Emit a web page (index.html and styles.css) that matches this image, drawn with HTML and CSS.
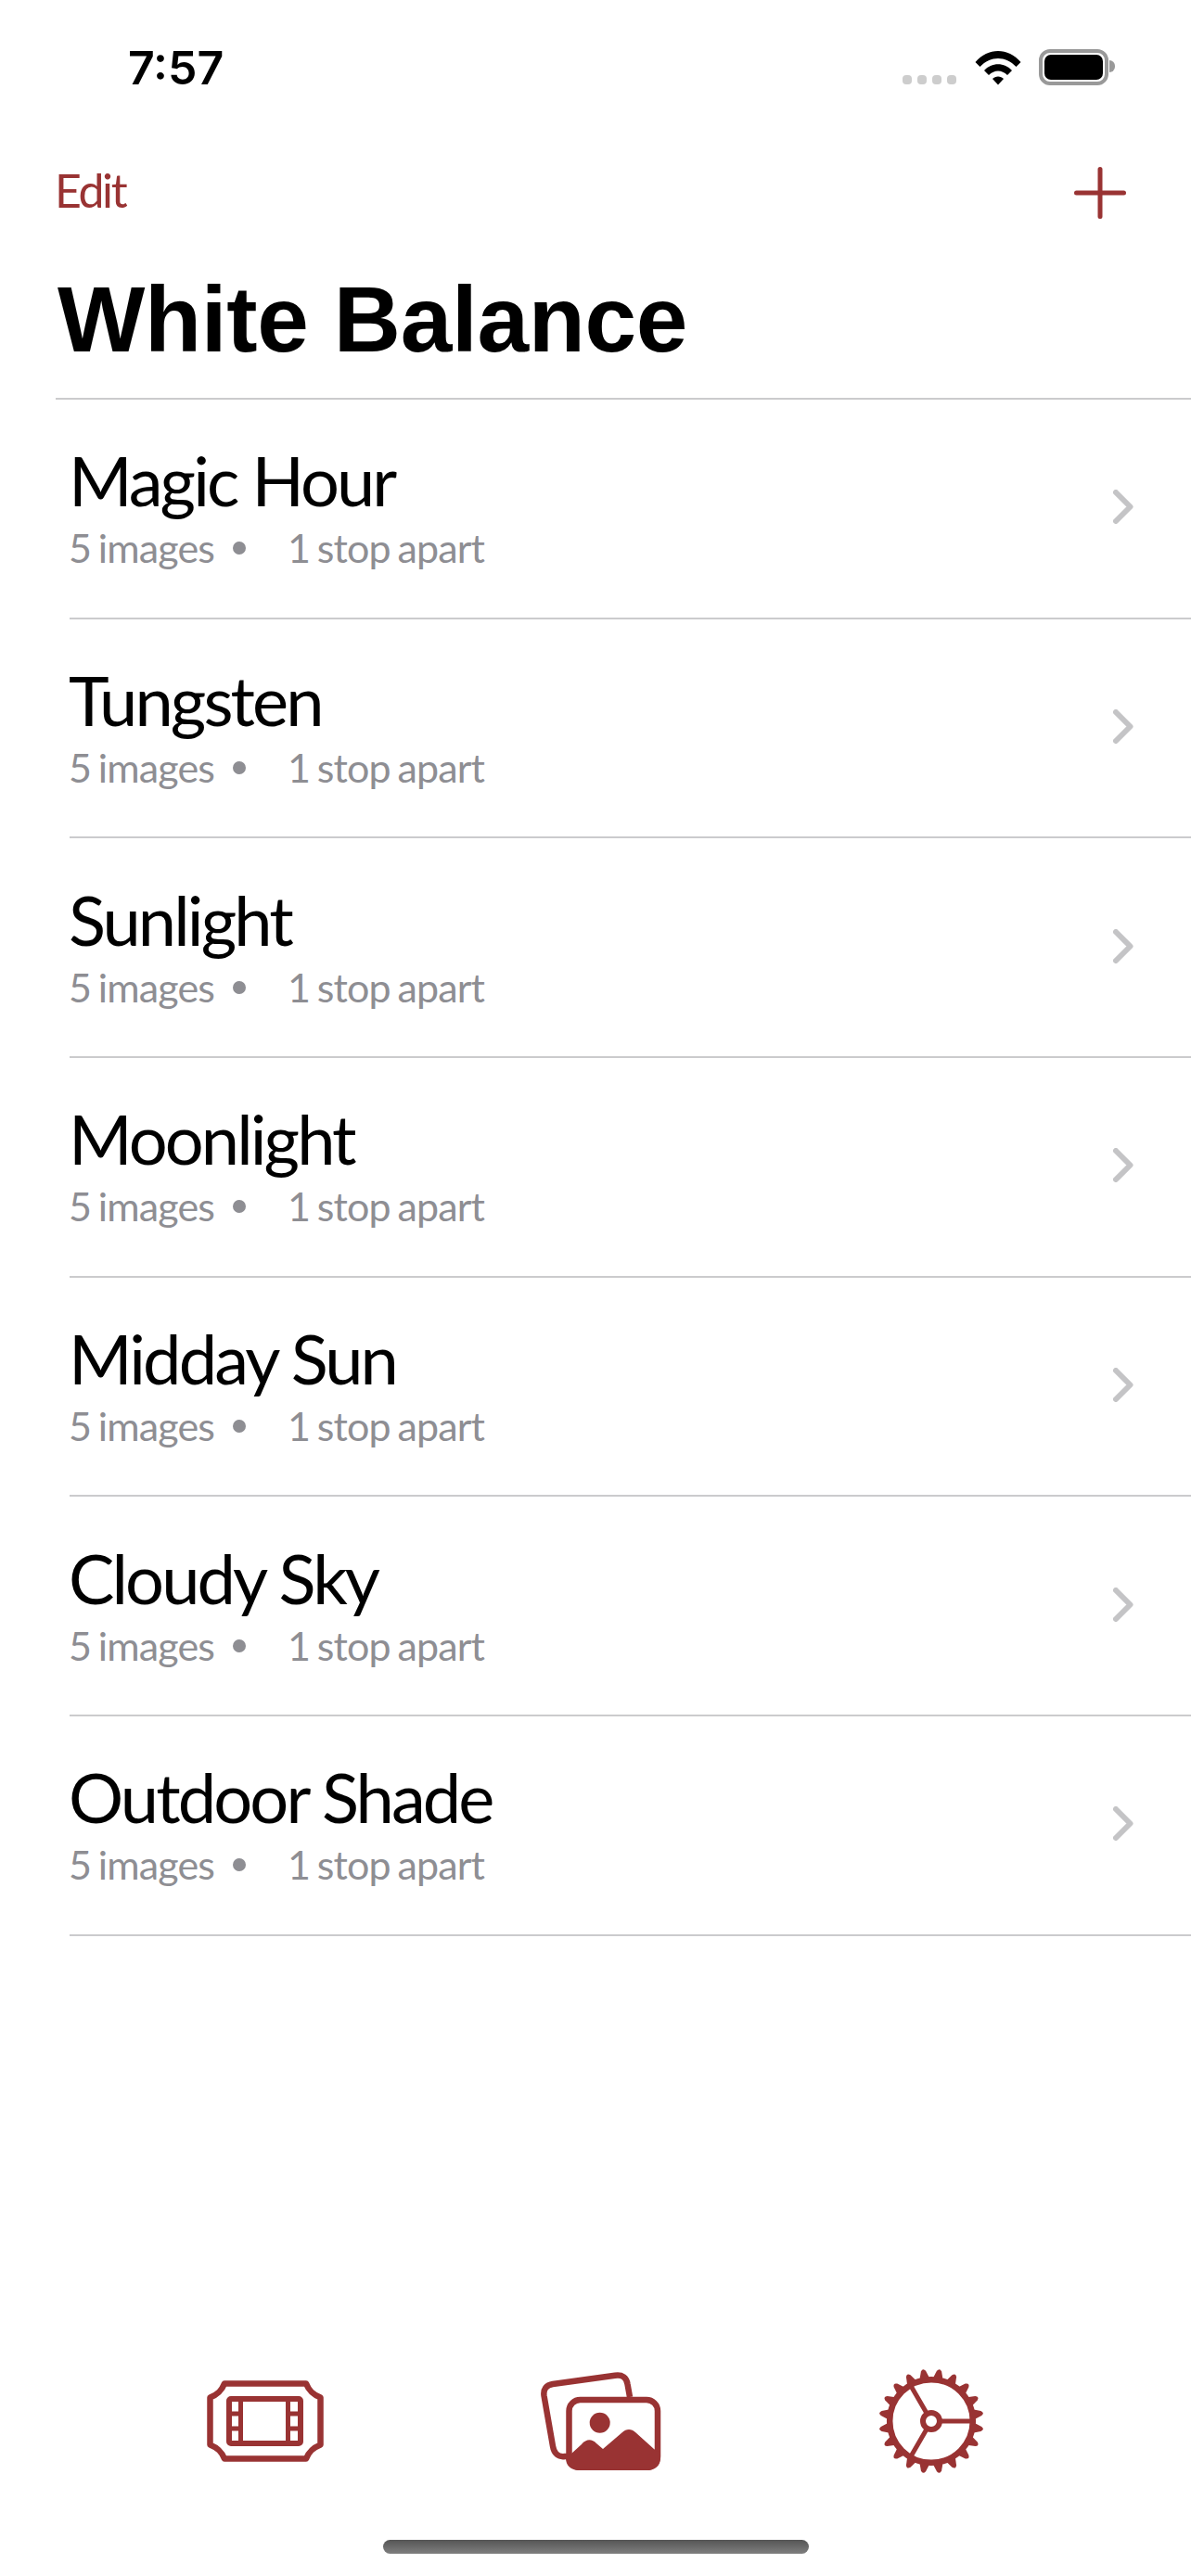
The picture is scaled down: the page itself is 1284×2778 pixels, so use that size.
FILE: index.html
```html
<!DOCTYPE html>
<html lang="en">
<head>
  <meta charset="UTF-8">
  <meta name="viewport" content="width=device-width, initial-scale=1.0">
  <title>White Balance</title>
  <link rel="stylesheet" href="styles.css">
</head>
<body>
  <div class="screen">
    <!-- status bar -->
    <div class="status-bar">
      <span class="time">7:57</span>
      <div class="status-icons">
        <div class="signal"><i></i><i></i><i></i><i></i></div>
        <svg class="wifi" width="50" height="38" viewBox="0 0 50 38">
          <path d="M0.5 13 C14 -3 36 -3 49.5 13 L44.5 18 C33 6 17 6 5.5 18 Z" fill="#000"/>
          <path d="M10 22 C18 13 32 13 40 22 L35 27 C29 21 21 21 15 27 Z" fill="#000"/>
          <path d="M19 31 C22 27.5 28 27.5 31 31 L25 37.5 Z" fill="#000"/>
        </svg>
        <div class="battery"><div class="battery-fill"></div></div>
      </div>
    </div>

    <!-- nav bar -->
    <div class="nav-bar">
      <span class="edit">Edit</span>
      <svg class="plus" width="56" height="56" viewBox="0 0 56 56">
        <path d="M28 2.5 V53.5 M2.5 28 H53.5" stroke="#993333" stroke-width="5" stroke-linecap="round" fill="none"/>
      </svg>
    </div>
    <h1 class="title">White Balance</h1>

    <!-- presets -->
    <ul class="list">
      <li class="row">
        <div class="row-text">
          <div class="row-name">Magic Hour</div>
          <div class="row-info"><span>5 images</span><span class="dot"></span><span>1 stop apart</span></div>
        </div>
        <svg class="chevron" width="22" height="37" viewBox="0 0 22 37"><path d="M3 3 L18.5 18.5 L3 34" stroke="#c4c4c6" stroke-width="6" stroke-linecap="round" stroke-linejoin="round" fill="none"/></svg>
      </li>
      <li class="row">
        <div class="row-text">
          <div class="row-name">Tungsten</div>
          <div class="row-info"><span>5 images</span><span class="dot"></span><span>1 stop apart</span></div>
        </div>
        <svg class="chevron" width="22" height="37" viewBox="0 0 22 37"><path d="M3 3 L18.5 18.5 L3 34" stroke="#c4c4c6" stroke-width="6" stroke-linecap="round" stroke-linejoin="round" fill="none"/></svg>
      </li>
      <li class="row">
        <div class="row-text">
          <div class="row-name">Sunlight</div>
          <div class="row-info"><span>5 images</span><span class="dot"></span><span>1 stop apart</span></div>
        </div>
        <svg class="chevron" width="22" height="37" viewBox="0 0 22 37"><path d="M3 3 L18.5 18.5 L3 34" stroke="#c4c4c6" stroke-width="6" stroke-linecap="round" stroke-linejoin="round" fill="none"/></svg>
      </li>
      <li class="row">
        <div class="row-text">
          <div class="row-name">Moonlight</div>
          <div class="row-info"><span>5 images</span><span class="dot"></span><span>1 stop apart</span></div>
        </div>
        <svg class="chevron" width="22" height="37" viewBox="0 0 22 37"><path d="M3 3 L18.5 18.5 L3 34" stroke="#c4c4c6" stroke-width="6" stroke-linecap="round" stroke-linejoin="round" fill="none"/></svg>
      </li>
      <li class="row">
        <div class="row-text">
          <div class="row-name">Midday Sun</div>
          <div class="row-info"><span>5 images</span><span class="dot"></span><span>1 stop apart</span></div>
        </div>
        <svg class="chevron" width="22" height="37" viewBox="0 0 22 37"><path d="M3 3 L18.5 18.5 L3 34" stroke="#c4c4c6" stroke-width="6" stroke-linecap="round" stroke-linejoin="round" fill="none"/></svg>
      </li>
      <li class="row">
        <div class="row-text">
          <div class="row-name">Cloudy Sky</div>
          <div class="row-info"><span>5 images</span><span class="dot"></span><span>1 stop apart</span></div>
        </div>
        <svg class="chevron" width="22" height="37" viewBox="0 0 22 37"><path d="M3 3 L18.5 18.5 L3 34" stroke="#c4c4c6" stroke-width="6" stroke-linecap="round" stroke-linejoin="round" fill="none"/></svg>
      </li>
      <li class="row">
        <div class="row-text">
          <div class="row-name">Outdoor Shade</div>
          <div class="row-info"><span>5 images</span><span class="dot"></span><span>1 stop apart</span></div>
        </div>
        <svg class="chevron" width="22" height="37" viewBox="0 0 22 37"><path d="M3 3 L18.5 18.5 L3 34" stroke="#c4c4c6" stroke-width="6" stroke-linecap="round" stroke-linejoin="round" fill="none"/></svg>
      </li>
    </ul>

    <!-- tab bar -->
    <div class="tab-bar">
      <svg class="tab-film" width="126" height="88" viewBox="0 0 126 88" fill="none" stroke="#993333">
        <path d="M19 3.5 H107 C110 11 114 15 122.5 18.5 V69.5 C114 73 110 77 107 84.5 H19 C16 77 12 73 3.5 69.5 V18.5 C12 15 16 11 19 3.5 Z" stroke-width="6.5" stroke-linejoin="round"/>
        <rect x="24" y="20" width="77" height="48" rx="2" stroke-width="6"/>
        <path d="M36.5 20 V68 M87.5 20 V68 M24 36 H36 M24 52 H36 M88 36 H101 M88 52 H101" stroke-width="5"/>
      </svg>
      <svg class="tab-photos" width="130" height="106" viewBox="0 0 130 106" fill="none">
        <path d="M96 27 L93.5 13 C92.5 6 88 2.5 80 3.7 L13 13 C6 14 2.5 18.5 3.5 25.5 L13 80 C14.3 88 19 92 26 91 H30" stroke="#993333" stroke-width="6.5"/>
        <rect x="30.5" y="30" width="95.5" height="73" rx="12" stroke="#993333" stroke-width="6.5"/>
        <circle cx="63.7" cy="54.7" r="11" fill="#993333"/>
        <path d="M33 88 L44 78 C49 72 55 72 60 77 L67 83 L88 65 C92 61 98 61 102 65 L122 83 L129 88 V93 C129 101 123 106 115 106 H41 C33 106 27 101 27 93 V88 Z" fill="#993333"/>
      </svg>
      <svg class="tab-gear" width="114" height="114" viewBox="-57 -57 114 114" fill="none" stroke="#993333">
        <defs>
          <path id="tooth" d="M-5.5 -46 L-2.6 -54.5 Q0 -58.5 2.6 -54.5 L5.5 -46 Z" fill="#993333" stroke="none"/>
        </defs>
        <circle r="44.8" stroke-width="6.5"/>
        <circle r="9" stroke-width="6"/>
        <path d="M11 0 H43 M-5.5 -9.5 L-21.7 -37.6 M-5.5 9.5 L-21.7 37.6" stroke-width="5"/>
        <use href="#tooth" transform="rotate(9)"/>
        <use href="#tooth" transform="rotate(27)"/>
        <use href="#tooth" transform="rotate(45)"/>
        <use href="#tooth" transform="rotate(63)"/>
        <use href="#tooth" transform="rotate(81)"/>
        <use href="#tooth" transform="rotate(99)"/>
        <use href="#tooth" transform="rotate(117)"/>
        <use href="#tooth" transform="rotate(135)"/>
        <use href="#tooth" transform="rotate(153)"/>
        <use href="#tooth" transform="rotate(171)"/>
        <use href="#tooth" transform="rotate(189)"/>
        <use href="#tooth" transform="rotate(207)"/>
        <use href="#tooth" transform="rotate(225)"/>
        <use href="#tooth" transform="rotate(243)"/>
        <use href="#tooth" transform="rotate(261)"/>
        <use href="#tooth" transform="rotate(279)"/>
        <use href="#tooth" transform="rotate(297)"/>
        <use href="#tooth" transform="rotate(315)"/>
        <use href="#tooth" transform="rotate(333)"/>
        <use href="#tooth" transform="rotate(351)"/>
      </svg>
    </div>
    <div class="home-bar"></div>
  </div>
</body>
</html>
```

FILE: styles.css
```css
body {
  margin: 0;
  background-color: #fff;
  font-family: 'Lato', 'Liberation Sans', sans-serif;
}

.screen {
  display: flex;
  flex-direction: column;
  width: 1284px;
  height: 2778px;
  overflow: hidden;
}

/* status bar */
.status-bar {
  display: flex;
  justify-content: space-between;
  align-items: flex-start;
  height: 160px;
  padding: 53px 89px 0 138px;
  box-sizing: border-box;
}

.time {
  font-family: 'Inter', sans-serif;
  font-weight: 600;
  font-size: 50px;
  line-height: 40px;
  color: #000;
}

.status-icons {
  display: flex;
  align-items: flex-end;
  height: 39px;
}

.signal {
  display: flex;
  gap: 6px;
  margin-right: 20px;
  margin-bottom: 1px;
}

.signal i {
  width: 10px;
  height: 10px;
  border-radius: 4px;
  background-color: #cdcdcd;
}

.wifi {
  margin-right: 19px;
}

.battery {
  position: relative;
  width: 75px;
  height: 39px;
  padding: 2px;
  box-sizing: border-box;
  border: 4px solid #999;
  border-radius: 12px;
}

.battery::after {
  content: '';
  position: absolute;
  right: -11px;
  top: 8px;
  width: 6px;
  height: 13px;
  border-radius: 0 6px 6px 0;
  background-color: #999;
}

.battery-fill {
  height: 100%;
  border-radius: 7px;
  background-color: #000;
}

/* nav bar */
.nav-bar {
  display: flex;
  justify-content: space-between;
  align-items: center;
  height: 96px;
  padding: 0 70px 0 59px;
}

.edit {
  margin-bottom: 6px;
  font-size: 50px;
  letter-spacing: -2.4px;
  color: #993333;
}

.title {
  margin: 0;
  height: 161px;
  padding: 12px 0 0 62px;
  font-family: 'Liberation Sans', sans-serif;
  font-size: 100px;
  font-weight: 700;
  letter-spacing: -0.35px;
  line-height: 152px;
  color: #000;
}

/* list */
.list {
  flex: 1;
  margin: 0 0 0 60px;
  padding: 0;
  list-style: none;
  border-top: 2px solid #cbcbcd;
}

.row {
  display: flex;
  justify-content: space-between;
  align-items: center;
  height: 236.7px;
  box-sizing: border-box;
  margin-left: 15px;
  padding-right: 62px;
  border-bottom: 2px solid #cbcbcd;
}

.row-text {
  margin-left: -1px;
  margin-bottom: 2px;
}

.row-name {
  font-size: 74px;
  letter-spacing: -2.9px;
  line-height: 85px;
  color: #000;
}

.row-info {
  display: flex;
  align-items: center;
  padding-top: 3px;
  font-size: 43px;
  letter-spacing: -0.85px;
  word-spacing: -2.5px;
  line-height: 56px;
  color: #8e8e93;
}

.dot {
  width: 14px;
  height: 14px;
  margin: 0 45px 0 20px;
  border-radius: 50%;
  background-color: #8e8e93;
}

.chevron {
  margin-bottom: 3px;
}

/* tab bar */
.tab-bar {
  display: flex;
  align-items: center;
  height: 120px;
  padding-left: 223px;
  margin-bottom: 68px;
}

.tab-film {
  margin-right: 234px;
}

.tab-photos {
  margin-right: 234px;
}

.home-bar {
  width: 459px;
  height: 15px;
  margin: 0 auto 24px;
  border-radius: 8px;
  background: linear-gradient(#555, #7f7f7f);
}
```
